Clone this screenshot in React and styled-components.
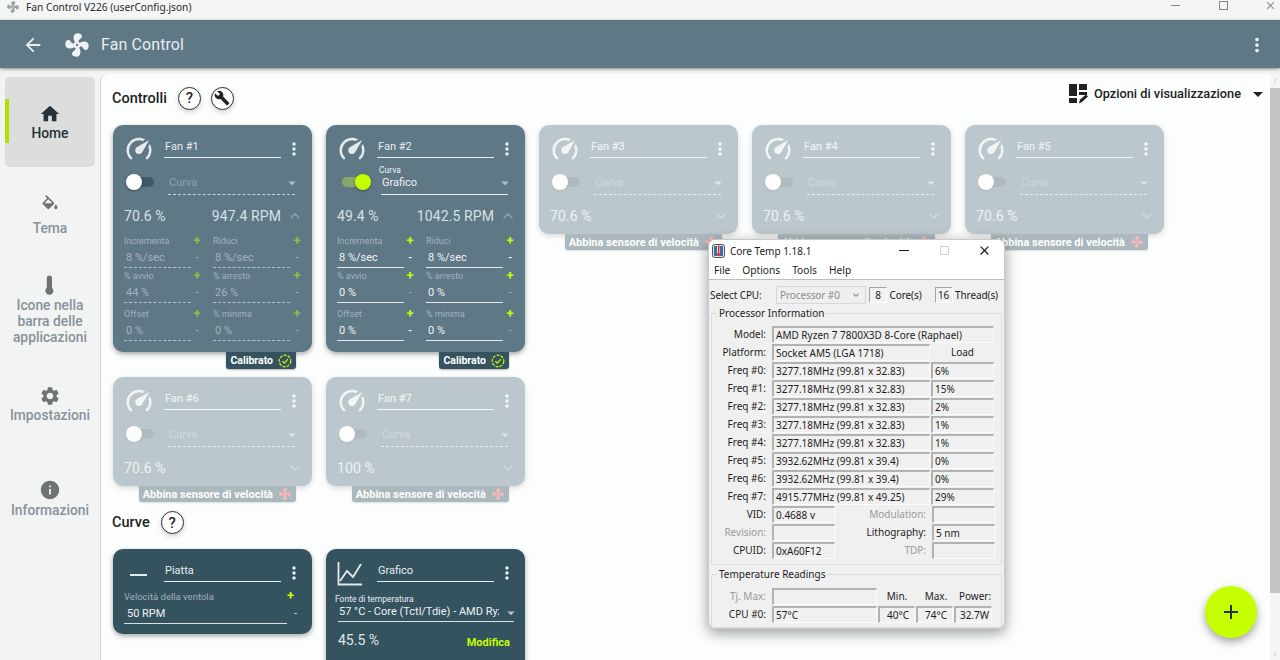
import React from "react";
import styled, { createGlobalStyle } from "styled-components";
import {
  MdHome, MdSettings, MdInfo, MdMoreVert, MdAdd, MdArrowBack,
  MdExpandLess, MdExpandMore, MdArrowDropDown, MdBuild, MdClose,
} from "react-icons/md";

const LIME = "#c6ff00";
const FAN = "M12,11A1,1 0 0,0 11,12A1,1 0 0,0 12,13A1,1 0 0,0 13,12A1,1 0 0,0 12,11M12.5,2C17,2 17.11,5.57 14.75,6.75C13.76,7.24 13.32,8.29 13.13,9.22C13.61,9.42 14.03,9.73 14.35,10.13C18.05,8.13 22.03,8.92 22.03,12.5C22.03,17 18.46,17.1 17.28,14.73C16.78,13.74 15.72,13.3 14.79,13.11C14.59,13.59 14.28,14 13.88,14.34C15.87,18.03 15.08,22 11.5,22C7,22 6.91,18.42 9.27,17.24C10.25,16.75 10.69,15.71 10.89,14.79C10.4,14.59 9.97,14.27 9.65,13.87C5.96,15.85 2,15.07 2,11.5C2,7 5.56,6.89 6.74,9.26C7.24,10.25 8.29,10.68 9.22,10.87C9.41,10.39 9.73,9.97 10.14,9.65C8.15,5.96 8.94,2 12.5,2Z";
const GAUGE = "M12,16A3,3 0 0,1 9,13C9,11.88 9.61,10.9 10.5,10.39L20.21,4.77L14.68,14.35C14.18,15.33 13.17,16 12,16M12,3C13.81,3 15.5,3.5 16.97,4.32L14.87,5.53C14,5.19 13,5 12,5A8,8 0 0,0 4,13C4,15.21 4.89,17.21 6.34,18.65H6.35C6.74,19.04 6.74,19.67 6.35,20.06C5.96,20.45 5.32,20.45 4.93,20.07V20.07C3.12,18.26 2,15.76 2,13A10,10 0 0,1 12,3M22,13C22,15.76 20.88,18.26 19.07,20.07V20.07C18.68,20.45 18.05,20.45 17.66,20.06C17.27,19.67 17.27,19.04 17.66,18.65V18.65C19.11,17.2 20,15.21 20,13C20,12 19.81,11 19.46,10.1L20.67,8C21.5,9.5 22,11.18 22,13Z";
const THERMO = "M14 14.8V5a2.6 2.6 0 0 0-5.2 0v9.8a4 4 0 1 0 5.2 0Z";
const BUCKET = "M19,11.5C19,11.5 17,13.67 17,15A2,2 0 0,0 19,17A2,2 0 0,0 21,15C21,13.67 19,11.5 19,11.5M5.21,10L10,5.21L14.79,10M16.56,8.94L7.62,0L6.21,1.41L8.59,3.79L3.44,8.94C2.85,9.5 2.85,10.47 3.44,11.06L8.94,16.56C9.23,16.85 9.62,17 10,17C10.38,17 10.77,16.85 11.06,16.56L16.56,11.06C17.15,10.47 17.15,9.5 16.56,8.94Z";

const Svg = ({ d, size = 24, color = "currentColor" }) => (
  <svg width={size} height={size} viewBox="0 0 24 24" fill={color} style={{ display: "block", flex: "none" }}><path d={d} /></svg>
);

const Global = createGlobalStyle`
  html, body { margin: 0; padding: 0; height: 660px; overflow: hidden; background: #f2f3f3; }
  body, button { font-family: Roboto, "Liberation Sans", sans-serif; }
  * { box-sizing: border-box; }
`;

const Page = styled.div`
  position: relative; width: 1280px; height: 660px; overflow: hidden;
  display: flex; flex-direction: column; background: #f2f3f3;
`;
const TitleBar = styled.div`
  flex: none; height: 20px; background: #f4f5f5; display: flex; align-items: center;
  padding: 0 0 7px 6px; color: #222; font: 10.2px "Noto Sans", sans-serif; gap: 6px;
`;
const TitleText = styled.span` flex: 1; color: #2a2a2a; `;
const WinButtons = styled.div`
  display: flex; align-items: center; color: #8a8a8a; margin: -2px -14.5px 0 0;
`;
const WinSlot = styled.div`
  width: 47.5px; height: 14px; display: flex; align-items: center; justify-content: center;
`;
const MinGlyph = styled.span` width: 9px; height: 1px; background: #888; `;
const MaxGlyph = styled.span` width: 9px; height: 9px; border: 1px solid #888; `;

const AppBar = styled.header`
  flex: none; height: 48px; background: #5e7886; color: #fff; display: flex; align-items: center;
  padding: 0 12px 0 22px; box-shadow: 0 1px 3px rgba(0,0,0,.45); z-index: 2; border-top: 1px solid #56707e;
`;
const BarTitle = styled.h1`
  margin: 0 0 0 10px; flex: 1; font-size: 16px; font-weight: 400; color: #e8edf0; letter-spacing: .1px;
`;
const LogoSlot = styled.span` margin-left: 19px; display: flex; color: #eef2f4; `;
const BackSlot = styled.span` display: flex; color: #e8edf0; `;

const Body = styled.div` flex: 1; display: flex; min-height: 0; `;
const Sidebar = styled.nav`
  flex: none; width: 100px; padding: 9px 5px 0; display: flex; flex-direction: column; gap: 4px;
`;
const NavItem = styled.div`
  position: relative; height: 90px; border-radius: 5px; display: flex; flex-direction: column;
  align-items: center; justify-content: center; text-align: center; overflow: hidden;
  padding-bottom: ${p => p.$pb || 0}px;
  background: ${p => (p.$active ? "#dcdddd" : "transparent")};
  color: ${p => (p.$active ? "#263238" : "#87929a")};
`;
const NavMark = styled.span`
  position: absolute; left: 0; top: 22px; width: 4px; height: 44px; background: #aee000;
`;
const NavIcon = styled.span` display: flex; color: ${p => (p.$active ? "#263238" : "#6f7376")}; margin-bottom: ${p => p.$gap || 0}px; `;
const NavLabel = styled.span` font-size: 13.8px; font-weight: 500; line-height: 16px; `;

const Main = styled.main`
  flex: 1; min-width: 0; margin-top: 6px; background: #fcfdfd; border-top-left-radius: 8px;
  border-left: 1px solid #d4d6d6; display: flex; overflow: hidden;
`;
const Content = styled.div` flex: 1; min-width: 0; padding: 0 0 0 12px; `;
const SectionHead = styled.div`
  display: flex; align-items: center; height: ${p => p.$h}px; gap: 10px; padding-bottom: ${p => p.$pb || 0}px;
`;
const SectionTitle = styled.h2`
  margin: 0 1px 0 -1px; font-size: 14.5px; font-weight: 500; color: #1d1d1d;
`;
const RoundButton = styled.span`
  width: 23px; height: 23px; border-radius: 50%; border: 1.5px solid #2b2b2b; background: #fff; color: #222;
  display: flex; align-items: center; justify-content: center; font-size: 15px; font-weight: 500;
  box-shadow: 0 2px 5px rgba(0,0,0,.18);
`;
const ViewOptions = styled.div`
  margin-left: auto; margin-top: -9px; display: flex; align-items: center; color: #222; font-size: 12.75px; font-weight: 500;
`;
const ViewText = styled.span` margin: 0 4px 0 6px; `;
const ArrowSlot = styled.span` display: flex; margin-left: 1px; `;

const Cards = styled.div`
  display: flex; flex-wrap: wrap; align-items: flex-start; column-gap: 14px; row-gap: 8px; width: 1065px;
`;
const CardWrap = styled.div`
  width: 199px; display: flex; flex-direction: column; align-items: flex-end;
  opacity: ${p => (p.$off ? 0.4 : 1)};
`;
const Card = styled.section`
  width: 199px; border-radius: 10px; background: ${p => (p.$dark ? "#35525f" : "#5e7886")};
  color: #fff; padding: 6px 11px 0; box-shadow: 0 2px 5px rgba(0,0,0,.35);
  height: ${p => p.$h}px; overflow: hidden; flex: none;
`;
const HeadRow = styled.div` display: flex; align-items: center; height: 36px; `;
const IconSlot = styled.span` width: 30px; flex: none; display: flex; color: #e4e9ec; margin-right: 10px; `;
const NameField = styled.div`
  flex: none; width: 117px; height: 26px; margin-top: -9px; border-bottom: 1px solid #e8edf0; font-size: 11px; padding: 8px 1px 0; color: #e8edf0; line-height: 14px;
`;
const Dots = styled.span` flex: none; display: flex; margin-left: 3px; color: #eef1f3; `;
const ToggleRow = styled.div` display: flex; align-items: center; height: 30px; `;
const ToggleTrack = styled.span`
  position: relative; width: 25px; height: 10px; border-radius: 5px; margin: 0 16px 0 5px; flex: none;
  background: ${p => (p.$on ? "#86a86a" : "#3f5a67")};
`;
const ToggleKnob = styled.span`
  position: absolute; top: -3px; left: ${p => (p.$on ? "13px" : "-3px")}; width: 16px; height: 16px; border-radius: 50%;
  background: ${p => (p.$on ? LIME : "#fff")}; box-shadow: 0 1px 3px rgba(0,0,0,.35);
`;
const SelectField = styled.div`
  position: relative; flex: 1; height: 27px; margin: -1px 6px 0 -2px; display: flex; align-items: flex-end; padding: 0 0 5px 1px;
  border-bottom: 1px ${p => (p.$on ? "solid #e8edf0" : "dashed #c9d3d8")};
  font-size: 11px; line-height: 13px; color: ${p => (p.$on ? "#eef1f3" : "#8fa2ac")};
`;
const FloatLabel = styled.span`
  position: absolute; left: -2px; top: -2px; font-size: 8.5px; line-height: 9px; color: #eef1f3;
`;
const SelectText = styled.span` flex: 1; `;
const DropSlot = styled.span` display: flex; margin: 0 -6px -3px 0; color: #b3c0c7; `;
const StatRow = styled.div`
  display: flex; align-items: center; height: 24px; margin-top: 7px; font-size: 14px; color: #d9e0e4; letter-spacing: .1px;
`;
const StatSpacer = styled.span` flex: 1; `;
const ChevSlot = styled.span` display: flex; margin: 0 -4px 0 0; width: 24px; justify-content: flex-end; color: #8fa2ac; `;
const Params = styled.div` display: grid; grid-template-columns: 89px 1fr; margin-top: 6px; `;
const Param = styled.div`
  display: flex; height: ${p => (p.$tall ? 38 : 35)}px; padding-top: ${p => (p.$tall ? 3 : 0)}px;
`;
const ParamField = styled.div`
  width: ${p => p.$w}px; flex: none; display: flex; flex-direction: column;
`;
const ParamLabel = styled.span` font-size: 9px; line-height: 14px; height: 13px; color: #a3b3bc; white-space: nowrap; `;
const ParamValue = styled.span`
  height: 21px; line-height: 20px; padding: 1px 2px 0; font-size: 11px; border-bottom: 1px ${p => (p.$on ? "solid #e4e9ec" : "dashed #b5c2c9")};
  color: ${p => (p.$on ? "#f1f3f5" : "#a3b3bc")}; white-space: nowrap;
`;
const ParamButtons = styled.div`
  width: 16px; flex: none; margin-left: ${p => p.$ml || 0}px; display: flex; flex-direction: column; align-items: center;
`;
const Plus = styled.span`
  height: 15px; line-height: 14px; font-size: 13px; font-weight: 700; color: ${LIME}; opacity: ${p => (p.$on ? 1 : .5)};
`;
const Minus = styled.span`
  height: 18px; line-height: 18px; font-size: 11px; font-weight: 500; color: #fff; opacity: ${p => (p.$on ? 1 : .35)};
`;
const Badge = styled.div`
  height: ${p => (p.$cal ? 17 : 16)}px; margin-right: 16px; padding: 0 4px; display: flex; align-items: center; gap: 5px;
  border-radius: 0 0 3px 3px; background: #35525f; color: #fff; font-size: ${p => (p.$cal ? 10.5 : 11)}px; font-weight: 700;
  white-space: nowrap; box-shadow: 0 1px 2px rgba(0,0,0,.3);
`;
const CurveRow = styled.div` display: flex; column-gap: 14px; align-items: flex-start; `;
const CurveLabelRow = styled.div` display: flex; margin-top: -1px; padding-right: 7px; font-size: 9.5px; line-height: 14px; color: #a0afb7; `;
const LabelGrow = styled.span` flex: 1; `;
const CurveValueRow = styled.div` display: flex; align-items: flex-end; padding-right: 4px; margin-top: 1px; `;
const CurveValue = styled.div`
  flex: 1; height: 19px; font-size: 11px; line-height: 17px; padding-left: 3px; border-bottom: 1px solid #d8dfe3; color: #eef1f3;
`;
const FlatMinus = styled.span` width: 10px; text-align: right; font-size: 11px; line-height: 17px; height: 19px; color: #dfe5e8; `;
const FlatPlus = styled.span` font-size: 13px; font-weight: 700; color: ${LIME}; line-height: 12px; `;
const SourceLabel = styled.div` font-size: 8.5px; line-height: 10px; color: #e8edf0; margin: 3px 0 0 -2px; `;
const SourceRow = styled.div`
  display: flex; align-items: center; height: 18px; margin-left: 1px; border-bottom: 1px solid #d8dfe3; padding: 0 0 2px 1px; font-size: 11px; color: #eef1f3; margin-top: 0;
`;
const SourceText = styled.span` width: 160px; overflow: hidden; white-space: nowrap; flex: none; `;
const ResultRow = styled.div` display: flex; align-items: flex-end; height: 26px; font-size: 14px; color: #e0e6e9; padding-left: 1px; `;
const EditLink = styled.span` margin-left: auto; margin-right: 4px; color: ${LIME}; font-size: 11px; font-weight: 700; transform: translateY(1px); `;

const ScrollBar = styled.div`
  flex: none; width: 10px; background: #f5f5f5; display: flex; flex-direction: column; align-items: center;
`;
const ScrollArrow = styled.span` height: 14px; font-size: 9px; line-height: 14px; color: #bbb; flex: none; `;
const ScrollThumb = styled.span` width: 10px; height: 505px; background: #c4c4c4; flex: none; `;
const ScrollFill = styled.span` flex: 1; `;

const Fab = styled.div`
  position: absolute; left: 1205px; top: 586px; width: 52px; height: 52px; border-radius: 50%;
  background: ${LIME}; color: #263238; display: flex; align-items: center; justify-content: center;
  box-shadow: 0 4px 8px rgba(0,0,0,.35);
`;

/* Core Temp window lies over the app */
const CT = styled.div`
  position: absolute; left: 708px; top: 239px; width: 297px; height: 390px; border-radius: 7px; overflow: hidden;
  background: #f0f0f0; box-shadow: 0 4px 14px rgba(0,0,0,.4); border: 1px solid #c9c9c9;
  font: 10px "Noto Sans", "Open Sans", sans-serif; color: #1c1c1c; z-index: 3;
`;
const CTTitle = styled.div`
  height: 21px; background: #fff; display: flex; align-items: center; padding-left: 3px; font-size: 10px;
`;
const CTTitleText = styled.span` flex: 1; margin-left: 5px; `;
const CTBtn = styled.span`
  width: 40px; display: flex; justify-content: center; align-items: center; color: #222;
`;
const CTMin = styled.span` width: 10px; height: 1px; background: #222; `;
const CTMax = styled.span` width: 9px; height: 9px; border: 1px solid #cfcfcf; border-radius: 1px; `;
const CTMenu = styled.div`
  height: 19px; background: #fff; border-bottom: 1px solid #bdbdbd; display: flex; align-items: center; padding-left: 5px; gap: 12px; font-size: 10.2px;
`;
const CTBody = styled.div` padding: 5px 2px 0; `;
const CPURow = styled.div` display: flex; align-items: center; height: 19px; margin-left: -1px; letter-spacing: -.1px; white-space: nowrap; `;
const CPULabel = styled.span` width: 66px; flex: none; `;
const CPUSelect = styled.span`
  flex: none; width: 90px; height: 18px; display: flex; align-items: center; justify-content: space-between; padding: 0 3px; color: #8d8d8d; background: #efefef; border: 1px solid #d8d8d8; margin-right: 3px;
`;
const CPUCount = styled.span`
  flex: none; width: 18px; height: 16px; line-height: 15px; text-align: center; background: #f2f2f2; border: 1px solid #fff; border-top-color: #a5a5a5; border-left-color: #a5a5a5;
`;
const CPUSpacer = styled.span` width: 13px; flex: none; `;
const Group = styled.fieldset`
  margin: ${p => p.$mt || 0}px 0 0; padding: ${p => p.$pt}px 5px ${p => p.$pb}px 0; border: 1px solid #dcdcdc; border-radius: 2px;
  min-width: 0;
`;
const Legend = styled.legend` padding: 0 2px; margin-left: 5px; font-size: 10px; line-height: 12px; `;
const CTRow = styled.div` display: flex; height: 18px; gap: 1px; align-items: flex-start; `;
const CTLabel = styled.span`
  width: ${p => p.$w || 57}px; flex: none; text-align: right; line-height: 17px; padding-right: 3px; margin-right: 2px; white-space: nowrap;
  color: ${p => (p.$off ? "#9a9a9a" : "#1c1c1c")};
`;
const Field = styled.span`
  width: ${p => p.$w}px; flex: none; height: 17px; line-height: 15px; padding: 0 0 0 2px; white-space: nowrap; overflow: hidden;
  background: #f0f0f0; border: 1px solid #fbfbfb; border-top: 2px solid #b2b2b2; border-left: 2px solid #b2b2b2;
  text-align: ${p => (p.$center ? "center" : "left")};
`;
const Caption = styled.span`
  width: ${p => p.$w}px; flex: none; height: 17px; line-height: 17px; text-align: center;
`;

const FanIconRed = () => <Svg d={FAN} size={14} color="#f0505f" />;
const CheckRing = () => (
  <svg width="14" height="14" viewBox="0 0 14 14" fill="none" stroke={LIME} style={{ display: "block" }}>
    <circle cx="7" cy="7" r="5.8" strokeDasharray="3 1.2" strokeWidth="1.2" />
    <path d="M4.3 7.2l2 2 3.6-4" strokeWidth="1.2" />
  </svg>
);
const ViewIcon = () => (
  <svg width="19" height="20" viewBox="0 0 19 20" fill="#222" style={{ display: "block" }}>
    <rect x="0" y="0" width="8" height="12" /><rect x="0" y="14" width="8" height="5" />
    <rect x="10" y="0" width="8" height="6" /><rect x="10" y="8" width="8" height="3" />
    <path d="M10 19.5l1-4 6-5 2 2-6 5.5z" />
  </svg>
);
const CTIcon = () => (
  <svg width="13" height="14" viewBox="0 0 13 14" style={{ display: "block" }}>
    <rect x=".5" y=".5" width="12" height="13" rx="2" fill="#e9e2d4" stroke="#555" />
    <rect x="2" y="2" width="3" height="10" fill="#3a6ea8" /><rect x="8" y="2" width="3" height="10" fill="#3a6ea8" />
    <path d="M6 1.5h1.5l-.3 8H6z" fill="#d22" /><circle cx="6.6" cy="10.5" r="1.6" fill="#d22" />
  </svg>
);
const CurveIcon = () => (
  <svg width="26" height="26" viewBox="0 0 26 26" fill="none" stroke="#e4e9ec" strokeWidth="1.8" style={{ display: "block" }}>
    <path d="M1.5 2v22.5H25" /><path d="M3 21l7-10 6 6 8-13" />
  </svg>
);
const FlatIcon = styled.span` flex: none; width: 17px; height: 2px; background: #e4e9ec; display: block; margin: 4px 17px 0 6px; `;

const Drop = () => <DropSlot><MdArrowDropDown size={18} /></DropSlot>;

const ParamCell = ({ label, value, w, on, plusOn, minusOn, tall, ml }) => (
  <Param $tall={tall}>
    <ParamField $w={w}>
      <ParamLabel>{label}</ParamLabel>
      <ParamValue $on={on}>{value}</ParamValue>
    </ParamField>
    <ParamButtons $ml={ml}>
      <Plus $on={plusOn}>+</Plus>
      <Minus $on={minusOn}>-</Minus>
    </ParamButtons>
  </Param>
);

const paramRows = [
  [["Incrementa", "8 %/sec"], ["Riduci", "8 %/sec"]],
  [["% avvio", "44 %", "0 %"], ["% arresto", "26 %", "0 %"]],
  [["Offset", "0 %"], ["% minima", "0 %"]],
];

const FanCard = ({ name, on, pct, rpm, expanded, off, badge }) => (
  <CardWrap $off={off}>
    <Card $h={expanded ? 227 : 109}>
      <HeadRow>
        <IconSlot><Svg d={GAUGE} size={30} /></IconSlot>
        <NameField>{name}</NameField>
        <Dots><MdMoreVert size={20} /></Dots>
      </HeadRow>
      <ToggleRow>
        <ToggleTrack $on={on}><ToggleKnob $on={on} /></ToggleTrack>
        <SelectField $on={on}>
          {on && <FloatLabel>Curva</FloatLabel>}
          <SelectText>{on ? "Grafico" : "Curva"}</SelectText>
          <Drop />
        </SelectField>
      </ToggleRow>
      <StatRow>
        <span>{pct}</span>
        <StatSpacer />
        {rpm && <span>{rpm}</span>}
        <ChevSlot>{expanded ? <MdExpandLess size={20} /> : <MdExpandMore size={20} />}</ChevSlot>
      </StatRow>
      {expanded && (
        <Params>
          {paramRows.map((row, i) => (
            <React.Fragment key={i}>
              <ParamCell label={row[0][0]} value={on ? (row[0][2] || row[0][1]) : row[0][1]} w={67} ml={-2} on={on} plusOn={on} minusOn={on && i !== 1} tall={i === 2} />
              <ParamCell label={row[1][0]} value={on ? (row[1][2] || row[1][1]) : row[1][1]} w={77} ml={-1} on={on} plusOn={on} minusOn={on && i === 0} tall={i === 2} />
            </React.Fragment>
          ))}
        </Params>
      )}
    </Card>
    {badge === "cal" ? (
      <Badge $cal>Calibrato <CheckRing /></Badge>
    ) : (
      <Badge>Abbina sensore di velocità <FanIconRed /></Badge>
    )}
  </CardWrap>
);

const freqs = [
  ["3277.18MHz (99.81 x 32.83)", "6%"], ["3277.18MHz (99.81 x 32.83)", "15%"], ["3277.18MHz (99.81 x 32.83)", "2%"],
  ["3277.18MHz (99.81 x 32.83)", "1%"], ["3277.18MHz (99.81 x 32.83)", "1%"], ["3932.62MHz (99.81 x 39.4)", "0%"],
  ["3932.62MHz (99.81 x 39.4)", "0%"], ["4915.77MHz (99.81 x 49.25)", "29%"],
];

const CoreTemp = () => (
  <CT>
    <CTTitle>
      <CTIcon />
      <CTTitleText>Core Temp 1.18.1</CTTitleText>
      <CTBtn><CTMin /></CTBtn>
      <CTBtn><CTMax /></CTBtn>
      <CTBtn><MdClose size={15} /></CTBtn>
    </CTTitle>
    <CTMenu><span>File</span><span>Options</span><span>Tools</span><span>Help</span></CTMenu>
    <CTBody>
      <CPURow>
        <CPULabel>Select CPU:</CPULabel>
        <CPUSelect>Processor #0 <MdExpandMore size={12} /></CPUSelect>
        <CPUCount>8</CPUCount>&nbsp;Core(s)
        <CPUSpacer />
        <CPUCount>16</CPUCount>&nbsp;Thread(s)
      </CPURow>
      <Group $mt={3} $pt={7} $pb={4}>
        <Legend>Processor Information</Legend>
        <CTRow><CTLabel>Model:</CTLabel><Field $w={222}>AMD Ryzen 7 7800X3D 8-Core (Raphael)</Field></CTRow>
        <CTRow><CTLabel>Platform:</CTLabel><Field $w={158}>Socket AM5 (LGA 1718)</Field><Caption $w={63}>Load</Caption></CTRow>
        {freqs.map((f, i) => (
          <CTRow key={i}><CTLabel>Freq #{i}:</CTLabel><Field $w={158}>{f[0]}</Field><Field $w={63}>{f[1]}</Field></CTRow>
        ))}
        <CTRow><CTLabel>VID:</CTLabel><Field $w={63}>0.4688 v</Field><CTLabel $w={93} $off>Modulation:</CTLabel><Field $w={63} /></CTRow>
        <CTRow><CTLabel $off>Revision:</CTLabel><Field $w={63} /><CTLabel $w={93}>Lithography:</CTLabel><Field $w={63}>5 nm</Field></CTRow>
        <CTRow><CTLabel>CPUID:</CTLabel><Field $w={63}>0xA60F12</Field><CTLabel $w={93} $off>TDP:</CTLabel><Field $w={63} /></CTRow>
      </Group>
      <Group $mt={3} $pt={8} $pb={3}>
        <Legend>Temperature Readings</Legend>
        <CTRow><CTLabel $off>Tj. Max:</CTLabel><Field $w={105} /><Caption $w={38}>Min.</Caption><Caption $w={38}>Max.</Caption><Caption $w={38}>Power:</Caption></CTRow>
        <CTRow><CTLabel>CPU #0:</CTLabel><Field $w={105}>57°C</Field><Field $w={37} $center>40°C</Field><Field $w={37} $center>74°C</Field><Field $w={38} $center>32.7W</Field></CTRow>
      </Group>
    </CTBody>
  </CT>
);

export default function App() {
  return (
    <Page>
      <Global />
      <TitleBar>
        <Svg d={FAN} size={14} color="#9aa3a8" />
        <TitleText>Fan Control V226 (userConfig.json)</TitleText>
        <WinButtons>
          <WinSlot><MinGlyph /></WinSlot>
          <WinSlot><MaxGlyph /></WinSlot>
          <WinSlot><MdClose size={13} /></WinSlot>
        </WinButtons>
      </TitleBar>
      <AppBar>
        <BackSlot><MdArrowBack size={22} /></BackSlot>
        <LogoSlot><Svg d={FAN} size={28} /></LogoSlot>
        <BarTitle>Fan Control</BarTitle>
        <Dots><MdMoreVert size={22} /></Dots>
      </AppBar>
      <Body>
        <Sidebar>
          <NavItem $active>
            <NavMark />
            <NavIcon $active><MdHome size={22} /></NavIcon>
            <NavLabel>Home</NavLabel>
          </NavItem>
          <NavItem $pb={2}>
            <NavIcon $gap={5}><Svg d={BUCKET} size={20} /></NavIcon>
            <NavLabel>Tema</NavLabel>
          </NavItem>
          <NavItem $pb={2}>
            <NavIcon><Svg d={THERMO} size={24} /></NavIcon>
            <NavLabel>Icone nella<br />barra delle<br />applicazioni</NavLabel>
          </NavItem>
          <NavItem>
            <NavIcon><MdSettings size={22} /></NavIcon>
            <NavLabel>Impostazioni</NavLabel>
          </NavItem>
          <NavItem>
            <NavIcon $gap={1}><MdInfo size={22} /></NavIcon>
            <NavLabel>Informazioni</NavLabel>
          </NavItem>
        </Sidebar>
        <Main>
          <Content>
            <SectionHead $h={51} $pb={3}>
              <SectionTitle>Controlli</SectionTitle>
              <RoundButton>?</RoundButton>
              <RoundButton><MdBuild size={16} /></RoundButton>
              <ViewOptions>
                <ViewIcon />
                <ViewText>Opzioni di visualizzazione</ViewText>
                <ArrowSlot><MdArrowDropDown size={24} /></ArrowSlot>
              </ViewOptions>
            </SectionHead>
            <Cards>
              <FanCard name="Fan #1" pct="70.6 %" rpm="947.4 RPM" expanded badge="cal" />
              <FanCard name="Fan #2" pct="49.4 %" rpm="1042.5 RPM" expanded on badge="cal" />
              <FanCard name="Fan #3" pct="70.6 %" off />
              <FanCard name="Fan #4" pct="70.6 %" off />
              <FanCard name="Fan #5" pct="70.6 %" off />
              <FanCard name="Fan #6" pct="70.6 %" off />
              <FanCard name="Fan #7" pct="100 %" off />
            </Cards>
            <SectionHead $h={47} $pb={6}>
              <SectionTitle>Curve</SectionTitle>
              <RoundButton>?</RoundButton>
            </SectionHead>
            <CurveRow>
              <Card $dark $h={85}>
                <HeadRow>
                  <FlatIcon />
                  <NameField>Piatta</NameField>
                  <Dots><MdMoreVert size={20} /></Dots>
                </HeadRow>
                <CurveLabelRow><LabelGrow>Velocità della ventola</LabelGrow><FlatPlus>+</FlatPlus></CurveLabelRow>
                <CurveValueRow><CurveValue>50 RPM</CurveValue><FlatMinus>-</FlatMinus></CurveValueRow>
              </Card>
              <Card $dark $h={130}>
                <HeadRow>
                  <IconSlot><CurveIcon /></IconSlot>
                  <NameField>Grafico</NameField>
                  <Dots><MdMoreVert size={20} /></Dots>
                </HeadRow>
                <SourceLabel>Fonte di temperatura</SourceLabel>
                <SourceRow><SourceText>57 °C - Core (Tctl/Tdie) - AMD Ryzen</SourceText><LabelGrow /><Drop /></SourceRow>
                <ResultRow><span>45.5 %</span><EditLink>Modifica</EditLink></ResultRow>
              </Card>
            </CurveRow>
          </Content>
          <ScrollBar>
            <ScrollArrow>↑</ScrollArrow>
            <ScrollThumb />
            <ScrollFill />
            <ScrollArrow>↓</ScrollArrow>
          </ScrollBar>
        </Main>
      </Body>
      <Fab><MdAdd size={24} /></Fab>
      <CoreTemp />
    </Page>
  );
}
